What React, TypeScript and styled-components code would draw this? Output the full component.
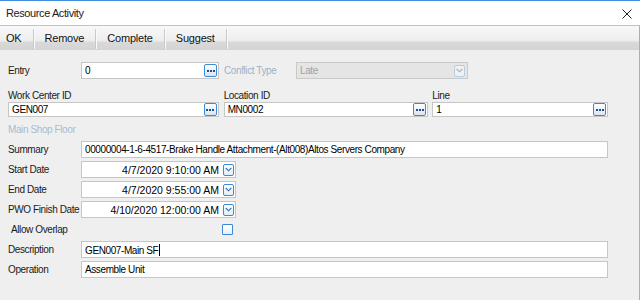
import React, { FC } from 'react';
import styled, { createGlobalStyle } from 'styled-components';

const GlobalStyle = createGlobalStyle`
  html, body {
    margin: 0;
    padding: 0;
    background: #efefef;
  }
  body {
    font-family: 'Liberation Sans', Arial, sans-serif;
    color: #1a1a1a;
  }
`;

const Window = styled.div`
  width: 640px;
  height: 300px;
  box-sizing: border-box;
  border-top: 1px solid #3f8fdc;
  background: #efefef;
  overflow: hidden;
  display: flex;
  flex-direction: column;
`;

const TitleBar = styled.div`
  height: 24px;
  flex: none;
  background: #fff;
  border-bottom: 1px solid #a6cbea;
  display: flex;
  align-items: center;
  justify-content: space-between;
  padding: 0 8px 0 6px;
  font-size: 11px;
  letter-spacing: -0.4px;
  color: #1a1a1a;
`;

const CloseIcon = styled.svg`
  width: 10px;
  height: 10px;
  margin-top: 1px;
`;

const Frame = styled.div`
  flex: 1;
  border-right: 1px solid #8ab6df;
  display: flex;
  flex-direction: column;
`;

const Toolbar = styled.div`
  height: 24px;
  flex: none;
  display: flex;
  align-items: stretch;
  background: linear-gradient(
    #f8f8f8 0%,
    #efefef 55%,
    #e9e9e9 64%,
    #d9d9d9 66%,
    #d4d4d4 100%
  );
`;

const ToolButton = styled.div<{ $first?: boolean }>`
  display: flex;
  align-items: center;
  padding: 0 12px 0 ${(p) => (p.$first ? '6px' : '11px')};
  font-size: 11px;
  letter-spacing: -0.2px;
  color: #111;
  position: relative;
  padding-bottom: 1px;
  &::after {
    content: '';
    position: absolute;
    right: 0;
    top: 3px;
    bottom: 1px;
    width: 1px;
    background: #c9c9c9;
    box-shadow: 1px 0 0 #fafafa;
  }
`;

const Body = styled.div`
  padding: 12px 31px 0 8px;
  display: flex;
  flex-direction: column;
  font-size: 10px;
  letter-spacing: -0.4px;
`;

const Row = styled.div<{ $mt?: number }>`
  display: flex;
  align-items: center;
  height: 17px;
  margin-top: ${(p) => p.$mt ?? 3}px;
`;

const Label = styled.div<{ $w?: number; $muted?: boolean; $indent?: number }>`
  width: ${(p) => (p.$w ? `${p.$w}px` : 'auto')};
  flex: none;
  padding-left: ${(p) => p.$indent ?? 0}px;
  box-sizing: border-box;
  color: ${(p) => (p.$muted ? '#9db2c9' : '#1a1a1a')};
  white-space: nowrap;
`;

const Box = styled.div<{ $w?: number }>`
  height: 17px;
  box-sizing: border-box;
  width: ${(p) => (p.$w ? `${p.$w}px` : 'auto')};
  flex: ${(p) => (p.$w ? 'none' : '1')};
  border: 1px solid #c6c6c6;
  background: #fff;
  display: flex;
  align-items: center;
  padding: 0 1px 0 3px;
  color: #000;
  white-space: nowrap;
  overflow: hidden;
`;

const BoxText = styled.span<{ $right?: boolean }>`
  flex: 1;
  text-align: ${(p) => (p.$right ? 'right' : 'left')};
  padding-right: ${(p) => (p.$right ? '4px' : '0')};
  font-size: ${(p) => (p.$right ? '10.5px' : '10px')};
  letter-spacing: ${(p) => (p.$right ? '0' : '-0.4px')};
`;

const Caret = styled.span`
  display: inline-block;
  width: 1px;
  height: 12px;
  background: #000;
  vertical-align: -2px;
  margin-left: 1px;
`;

const DisabledBox = styled(Box)`
  background: #e5e5e5;
  border-color: #cacaca;
  color: #a3a3a3;
  padding-right: 2px;
`;

const EllipsisButton = styled.div`
  width: 13px;
  height: 13px;
  box-sizing: border-box;
  border: 1px solid #3b8ad6;
  border-radius: 2px;
  background: linear-gradient(#ffffff, #dbe4ee);
  display: flex;
  align-items: center;
  justify-content: center;
  gap: 1px;
  flex: none;
  padding-top: 1px;
`;

const Dot = styled.span`
  width: 2px;
  height: 2px;
  background: #1f4f8e;
`;

const DropButton = styled.div<{ $disabled?: boolean }>`
  width: 11px;
  height: 12px;
  box-sizing: border-box;
  border: 1px solid ${(p) => (p.$disabled ? '#b9cde0' : '#3b8ad6')};
  border-radius: 2px;
  background: ${(p) => (p.$disabled ? '#f1f1f1' : 'linear-gradient(#ffffff, #e6edf5)')};
  display: flex;
  align-items: center;
  justify-content: center;
  flex: none;
`;

const Chevron = styled.svg`
  width: 7px;
  height: 5px;
`;

const Field = styled.div<{ $w: number; $mr?: number }>`
  width: ${(p) => p.$w}px;
  margin-right: ${(p) => p.$mr ?? 0}px;
  display: flex;
  flex-direction: column;
`;

const FieldLabel = styled.div`
  height: 13px;
  line-height: 13px;
`;

const Fields = styled.div`
  display: flex;
  margin-top: 10px;
`;

const Note = styled.div`
  height: 14px;
  line-height: 14px;
  margin-top: 6px;
  color: #a8bcd1;
`;

const Check = styled.div`
  width: 11px;
  height: 11px;
  box-sizing: border-box;
  border: 1px solid #3b8ad6;
  border-radius: 1px;
  background: linear-gradient(#ffffff, #e9eef4);
  margin-left: 133px;
`;

const Ellipsis: FC = () => (
  <EllipsisButton>
    <Dot />
    <Dot />
    <Dot />
  </EllipsisButton>
);

const Drop: FC<{ disabled?: boolean }> = ({ disabled }) => (
  <DropButton $disabled={disabled}>
    <Chevron viewBox='0 0 7 5'>
      <path
        d='M0.7 1 L3.5 3.8 L6.3 1'
        fill='none'
        stroke={disabled ? '#9fb4c9' : '#2f73c0'}
        strokeWidth='1.1'
      />
    </Chevron>
  </DropButton>
);

const DateRow: FC<{ label: string; value: string }> = ({ label, value }) => (
  <Row>
    <Label $w={73}>{label}</Label>
    <Box $w={155}>
      <BoxText $right>{value}</BoxText>
      <Drop />
    </Box>
  </Row>
);

const App: FC = () => (
  <>
    <GlobalStyle />
    <Window>
      <TitleBar>
        <span>Resource Activity</span>
        <CloseIcon viewBox='0 0 10 10'>
          <path d='M0.5 0.5 L9.5 9.5 M9.5 0.5 L0.5 9.5' stroke='#222' strokeWidth='1' />
        </CloseIcon>
      </TitleBar>
      <Frame>
        <Toolbar>
          <ToolButton $first>OK</ToolButton>
          <ToolButton>Remove</ToolButton>
          <ToolButton>Complete</ToolButton>
          <ToolButton>Suggest</ToolButton>
        </Toolbar>
        <Body>
          <Row $mt={0}>
            <Label $w={73}>Entry</Label>
            <Box $w={138}>
              <BoxText>0</BoxText>
              <Ellipsis />
            </Box>
            <Label $w={77} $muted $indent={5}>
              Conflict Type
            </Label>
            <DisabledBox $w={172}>
              <BoxText>Late</BoxText>
              <Drop disabled />
            </DisabledBox>
          </Row>
          <Fields>
            <Field $w={211} $mr={5}>
              <FieldLabel>Work Center ID</FieldLabel>
              <Box>
                <BoxText>GEN007</BoxText>
                <Ellipsis />
              </Box>
            </Field>
            <Field $w={205} $mr={4}>
              <FieldLabel>Location ID</FieldLabel>
              <Box>
                <BoxText>MN0002</BoxText>
                <Ellipsis />
              </Box>
            </Field>
            <Field $w={176}>
              <FieldLabel>Line</FieldLabel>
              <Box>
                <BoxText>1</BoxText>
                <Ellipsis />
              </Box>
            </Field>
          </Fields>
          <Note>Main Shop Floor</Note>
          <Row $mt={4}>
            <Label $w={73}>Summary</Label>
            <Box>
              <BoxText>00000004-1-6-4517-Brake Handle Attachment-(Alt008)Altos Servers Company</BoxText>
            </Box>
          </Row>
          <DateRow label='Start Date' value='4/7/2020 9:10:00 AM' />
          <DateRow label='End Date' value='4/7/2020 9:55:00 AM' />
          <DateRow label='PWO Finish Date' value='4/10/2020 12:00:00 AM' />
          <Row>
            <Label $w={81} $indent={3}>
              Allow Overlap
            </Label>
            <Check />
          </Row>
          <Row>
            <Label $w={73}>Description</Label>
            <Box>
              <BoxText>
                GEN007-Main SF
                <Caret />
              </BoxText>
            </Box>
          </Row>
          <Row>
            <Label $w={73}>Operation</Label>
            <Box>
              <BoxText>Assemble Unit</BoxText>
            </Box>
          </Row>
        </Body>
      </Frame>
    </Window>
  </>
);

export default App;
